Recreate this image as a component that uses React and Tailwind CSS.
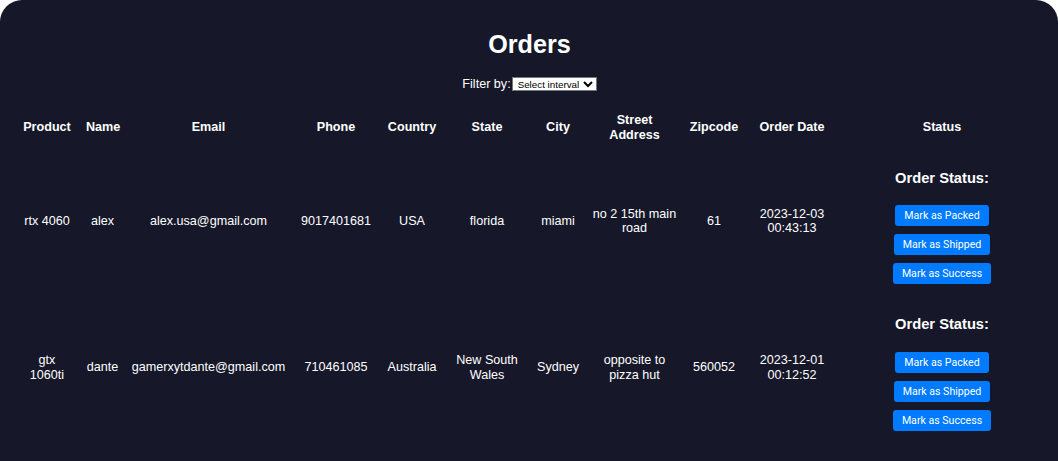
import React from "react";

const orders = [
  {
    id: 1,
    product: "rtx 4060",
    name: "alex",
    email: "alex.usa@gmail.com",
    phone: "9017401681",
    country: "USA",
    state: "florida",
    city: "miami",
    street: "no 2 15th main road",
    zipcode: "61",
    date: "2023-12-03 00:43:13",
  },
  {
    id: 2,
    product: "gtx 1060ti",
    name: "dante",
    email: "gamerxytdante@gmail.com",
    phone: "710461085",
    country: "Australia",
    state: "New South Wales",
    city: "Sydney",
    street: "opposite to pizza hut",
    zipcode: "560052",
    date: "2023-12-01 00:12:52",
  },
];

const columns = [
  { label: "Product", width: "w-[66px]" },
  { label: "Name", width: "w-[45px]" },
  { label: "Email", width: "w-[167px]" },
  { label: "Phone", width: "w-[88px]" },
  { label: "Country", width: "w-[64px]" },
  { label: "State", width: "w-[86px]" },
  { label: "City", width: "w-[56px]" },
  { label: "Street Address", width: "w-[97px]" },
  { label: "Zipcode", width: "w-[62px]" },
  { label: "Order Date", width: "w-[94px]" },
  { label: "Status", width: "w-[206px]" },
];

function StatusCell() {
  return (
    <div className="flex flex-col items-center">
      <h3 className="mt-[15.7px] mb-[18.8px] text-[14.7px] leading-[17px] font-bold">Order Status:</h3>
      <div className="flex flex-col items-center gap-2 pb-[4px]">
        {["Mark as Packed", "Mark as Shipped", "Mark as Success"].map((label) => (
          <button
            key={label}
            type="button"
            className="h-[21px] rounded-[3px] bg-[#007bff] px-[9px] font-['Roboto',sans-serif] text-[10.6px] leading-[21px] text-white"
          >
            {label}
          </button>
        ))}
      </div>
    </div>
  );
}

export default function App() {
  return (
    <div className="min-h-screen bg-white">
      <div className="min-h-[461px] rounded-t-[22px] bg-[#161829] pr-[13px] pl-[14px] font-['Liberation_Sans',Arial,sans-serif] text-white">
        <h1 className="pt-[30px] text-center text-[25.2px] leading-[29px] font-bold">Orders</h1>
        <div className="mt-[17.5px] flex h-[15px] items-center justify-center text-[12.6px] leading-[15px]">
          <span>Filter by:</span>
          <select className="ml-[1px] h-[14px] border border-[#767676] bg-white pl-[1px] text-[9.8px] leading-[12px] text-black">
            <option>Select interval</option>
          </select>
        </div>

        <table className="mt-[15.5px] w-full table-fixed border-collapse text-center text-[12.6px] leading-[14.5px]">
          <colgroup>
            {columns.map((col) => (
              <col key={col.label} className={col.width} />
            ))}
          </colgroup>
          <thead>
            <tr>
              {columns.map((col) => (
                <th key={col.label} className="px-[6px] py-[6px] align-middle font-bold">
                  {col.label}
                </th>
              ))}
            </tr>
          </thead>
          <tbody>
            {orders.map((order) => (
              <tr key={order.id}>
                <td className="px-[6px] py-[6px] align-middle">{order.product}</td>
                <td className="px-[6px] py-[6px] align-middle">{order.name}</td>
                <td className="px-[6px] py-[6px] align-middle whitespace-nowrap">{order.email}</td>
                <td className="px-[6px] py-[6px] align-middle">{order.phone}</td>
                <td className="px-[6px] py-[6px] align-middle">{order.country}</td>
                <td className="px-[6px] py-[6px] align-middle">{order.state}</td>
                <td className="px-[6px] py-[6px] align-middle">{order.city}</td>
                <td className="px-[6px] py-[6px] align-middle">{order.street}</td>
                <td className="px-[6px] py-[6px] align-middle">{order.zipcode}</td>
                <td className="px-[6px] py-[6px] align-middle">{order.date}</td>
                <td className="px-[6px] py-[6px] align-middle">
                  <StatusCell />
                </td>
              </tr>
            ))}
          </tbody>
        </table>
      </div>
    </div>
  );
}
